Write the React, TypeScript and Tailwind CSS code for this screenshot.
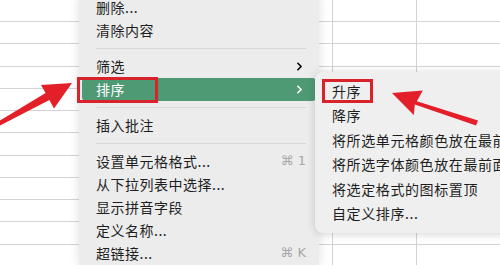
import React from "react";
import { ChevronRight } from "lucide-react";

const font = "font-['Noto_Sans_CJK_SC','Noto_Sans',sans-serif]";

type Item =
  | { kind: "sep" }
  | { kind: "item"; text: string; sub?: boolean; active?: boolean; key?: string };

const menuItems: Item[] = [
  { kind: "item", text: "删除..." },
  { kind: "item", text: "清除内容" },
  { kind: "sep" },
  { kind: "item", text: "筛选", sub: true },
  { kind: "item", text: "排序", sub: true, active: true },
  { kind: "sep" },
  { kind: "item", text: "插入批注" },
  { kind: "sep" },
  { kind: "item", text: "设置单元格格式...", key: "⌘ 1" },
  { kind: "item", text: "从下拉列表中选择..." },
  { kind: "item", text: "显示拼音字段" },
  { kind: "item", text: "定义名称..." },
  { kind: "item", text: "超链接...", key: "⌘ K" },
];

const sortItems = [
  "升序",
  "降序",
  "将所选单元格颜色放在最前面",
  "将所选字体颜色放在最前面",
  "将选定格式的图标置顶",
  "自定义排序...",
];

const rows = Array.from({ length: 12 });

const Sheet = () => (
  <div className="flex flex-col -mt-[0.25px]">
    {rows.map((_, i) => (
      <div key={i} className="flex h-[22.25px] border-b border-[#d3d3d3]">
        <div className="w-[333px] border-r border-[#d3d3d3]" />
        <div className="w-[84px] border-r border-[#d3d3d3]" />
        <div className="flex-1" />
      </div>
    ))}
  </div>
);

const ContextMenu = () => (
  <div className="absolute left-[79px] top-[-4.5px] w-[240px] bg-[#ececec] px-[3px] shadow-[0_0_10px_rgba(0,0,0,0.13)]">
    {menuItems.map((item, i) =>
      item.kind === "sep" ? (
        <div key={i} className="py-[6px] pl-[14px] pr-[10px]">
          <div className="h-px bg-[#d6d6d6]" />
        </div>
      ) : (
        <div
          key={i}
          className={`flex h-[23px] items-center justify-between rounded-[4px] pl-[14px] pr-[10px] text-[14px] tracking-[0.5px] ${
            item.active ? "bg-[#4e9a74] text-white" : "text-[#1e1e1e]"
          }`}
        >
          <span>{item.text}</span>
          {item.sub && (
            <ChevronRight
              size={13}
              strokeWidth={3}
              className={item.active ? "text-white" : "text-black"}
            />
          )}
          {item.key && (
            <span className="text-[13px] tracking-normal text-[#a8a8a8] font-['DejaVu_Sans',sans-serif]">
              {item.key}
            </span>
          )}
        </div>
      )
    )}
  </div>
);

const SortMenu = () => (
  <div className="absolute left-[315px] top-[72px] w-[210px] rounded-[8px] bg-[#efefef] py-[7px] pl-[17px] shadow-[0_1px_8px_rgba(0,0,0,0.18)]">
    {sortItems.map((t) => (
      <div
        key={t}
        className="flex h-[24.5px] items-center whitespace-nowrap text-[14px] tracking-[0.6px] text-[#1e1e1e]"
      >
        {t}
      </div>
    ))}
  </div>
);

const Arrows = () => (
  <svg className="absolute inset-0 pointer-events-none" width={500} height={265}>
    <polygon
      points="72,83 41,85 45.6,93.1 -3,122.3 -1,126 49.4,100.1 54,108.5"
      fill="#e3202a"
    />
    <polygon
      points="392,93 422.8,90.5 416.8,101.2 478,120.5 476,125.5 414.8,104.5 413.8,115"
      fill="#e3202a"
    />
  </svg>
);

export default function App() {
  return (
    <div className={`relative h-[265px] w-[500px] overflow-hidden bg-white ${font}`}>
      <Sheet />
      <ContextMenu />
      <SortMenu />
      <div className="absolute left-[77px] top-[77px] h-[26px] w-[81px] border-[3px] border-[#d8232b]" />
      <div className="absolute left-[322px] top-[79px] h-[24px] w-[51px] border-[3px] border-[#d8232b]" />
      <Arrows />
    </div>
  );
}
